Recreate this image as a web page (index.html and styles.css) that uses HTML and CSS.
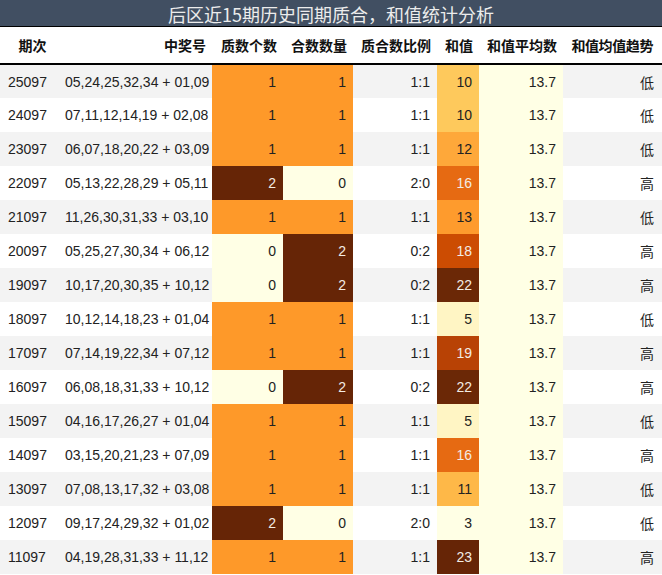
FILE: index.html
```html
<!DOCTYPE html>
<html lang="zh">
<head>
<meta charset="utf-8">
<title>后区近15期历史同期质合，和值统计分析</title>
<link rel="stylesheet" href="styles.css">
</head>
<body>
<div class="wrap">
  <div class="title">后区近15期历史同期质合，和值统计分析</div>
  <table class="stats">
    <colgroup>
      <col class="w-issue"><col class="w-num"><col class="w-prime"><col class="w-comp"><col class="w-ratio"><col class="w-sum"><col class="w-avg"><col class="w-trend">
    </colgroup>
    <thead>
      <tr>
        <th class="issue-h">期次</th><th>中奖号</th><th>质数个数</th><th>合数数量</th><th>质合数比例</th><th>和值</th><th>和值平均数</th><th class="trend-h">和值均值趋势</th>
      </tr>
    </thead>
    <tbody>
      <tr><td class="issue">25097</td><td>05,24,25,32,34 + 01,09</td><td class="h1">1</td><td class="h1">1</td><td>1:1</td><td style="background:#fec95c">10</td><td class="avg">13.7</td><td class="trend">低</td></tr>
      <tr><td class="issue">24097</td><td>07,11,12,14,19 + 02,08</td><td class="h1">1</td><td class="h1">1</td><td>1:1</td><td style="background:#fec95c">10</td><td class="avg">13.7</td><td class="trend">低</td></tr>
      <tr><td class="issue">23097</td><td>06,07,18,20,22 + 03,09</td><td class="h1">1</td><td class="h1">1</td><td>1:1</td><td style="background:#fea83a">12</td><td class="avg">13.7</td><td class="trend">低</td></tr>
      <tr><td class="issue">22097</td><td>05,13,22,28,29 + 05,11</td><td class="h2">2</td><td class="h0">0</td><td>2:0</td><td class="light" style="background:#e66a12">16</td><td class="avg">13.7</td><td class="trend">高</td></tr>
      <tr><td class="issue">21097</td><td>11,26,30,31,33 + 03,10</td><td class="h1">1</td><td class="h1">1</td><td>1:1</td><td style="background:#fe9b2d">13</td><td class="avg">13.7</td><td class="trend">低</td></tr>
      <tr><td class="issue">20097</td><td>05,25,27,30,34 + 06,12</td><td class="h0">0</td><td class="h2">2</td><td>0:2</td><td class="light" style="background:#cc4c02">18</td><td class="avg">13.7</td><td class="trend">高</td></tr>
      <tr><td class="issue">19097</td><td>10,17,20,30,35 + 10,12</td><td class="h0">0</td><td class="h2">2</td><td>0:2</td><td class="light" style="background:#6b2806">22</td><td class="avg">13.7</td><td class="trend">高</td></tr>
      <tr><td class="issue">18097</td><td>10,12,14,18,23 + 01,04</td><td class="h1">1</td><td class="h1">1</td><td>1:1</td><td style="background:#fff5c4">5</td><td class="avg">13.7</td><td class="trend">低</td></tr>
      <tr><td class="issue">17097</td><td>07,14,19,22,34 + 07,12</td><td class="h1">1</td><td class="h1">1</td><td>1:1</td><td class="light" style="background:#b84205">19</td><td class="avg">13.7</td><td class="trend">高</td></tr>
      <tr><td class="issue">16097</td><td>06,08,18,31,33 + 10,12</td><td class="h0">0</td><td class="h2">2</td><td>0:2</td><td class="light" style="background:#6b2806">22</td><td class="avg">13.7</td><td class="trend">高</td></tr>
      <tr><td class="issue">15097</td><td>04,16,17,26,27 + 01,04</td><td class="h1">1</td><td class="h1">1</td><td>1:1</td><td style="background:#fff5c4">5</td><td class="avg">13.7</td><td class="trend">低</td></tr>
      <tr><td class="issue">14097</td><td>03,15,20,21,23 + 07,09</td><td class="h1">1</td><td class="h1">1</td><td>1:1</td><td class="light" style="background:#e66a12">16</td><td class="avg">13.7</td><td class="trend">高</td></tr>
      <tr><td class="issue">13097</td><td>07,08,13,17,32 + 03,08</td><td class="h1">1</td><td class="h1">1</td><td>1:1</td><td style="background:#feb848">11</td><td class="avg">13.7</td><td class="trend">低</td></tr>
      <tr><td class="issue">12097</td><td>09,17,24,29,32 + 01,02</td><td class="h2">2</td><td class="h0">0</td><td>2:0</td><td style="background:#ffffe5">3</td><td class="avg">13.7</td><td class="trend">低</td></tr>
      <tr><td class="issue">11097</td><td>04,19,28,31,33 + 11,12</td><td class="h1">1</td><td class="h1">1</td><td>1:1</td><td class="light" style="background:#662506">23</td><td class="avg">13.7</td><td class="trend">高</td></tr>
    </tbody>
  </table>
</div>
</body>
</html>
```
FILE: styles.css
```css
html, body {
  margin: 0;
  padding: 0;
  background: #ffffff;
}
.wrap {
  width: 662px;
  font-family: "Liberation Sans", "Noto Sans CJK SC", sans-serif;
  color: #222222;
}
.title {
  height: 26px;
  line-height: 28px;
  background: #414f62;
  border-bottom: 1px solid #000000;
  color: #ececec;
  text-align: center;
  font-family: "Noto Sans CJK SC", sans-serif;
  font-size: 18px;
}
.stats {
  width: 662px;
  border-collapse: collapse;
  table-layout: fixed;
  font-size: 14px;
}
.w-issue { width: 65px; }
.w-num { width: 147px; }
.w-prime { width: 71px; }
.w-comp { width: 70px; }
.w-ratio { width: 84px; }
.w-sum { width: 42px; }
.w-avg { width: 84px; }
.w-trend { width: 99px; }
.stats th {
  height: 37px;
  padding: 0 6px 8px 0;
  text-align: right;
  vertical-align: bottom;
  box-sizing: border-box;
  border-bottom: 2px solid #000000;
  font-family: "Noto Sans CJK SC", sans-serif;
  font-weight: 700;
  font-size: 14px;
  color: #111111;
  white-space: nowrap;
}
.stats th.issue-h {
  text-align: center;
  padding: 0 0 8px 0;
}
.stats th.trend-h {
  padding-right: 9px;
  letter-spacing: -0.4px;
}
.stats td {
  height: 34px;
  padding: 0 7px 0 0;
  box-sizing: border-box;
  text-align: right;
  vertical-align: middle;
  white-space: nowrap;
}
.stats tbody tr:nth-child(odd) {
  background: #f3f3f3;
}
.stats tbody tr:nth-child(even) {
  background: #ffffff;
}
.stats td.issue {
  text-align: left;
  padding: 0 0 0 8px;
}
.stats td.trend {
  font-family: "Noto Sans CJK SC", sans-serif;
  padding-right: 8px;
}
.h1 { background: #fe9929; }
.h2 { background: #662506; color: #f3ece4; }
.h0 { background: #ffffe5; }
.avg { background: #ffffe5; }
.light { color: #f3ece4; }
```
